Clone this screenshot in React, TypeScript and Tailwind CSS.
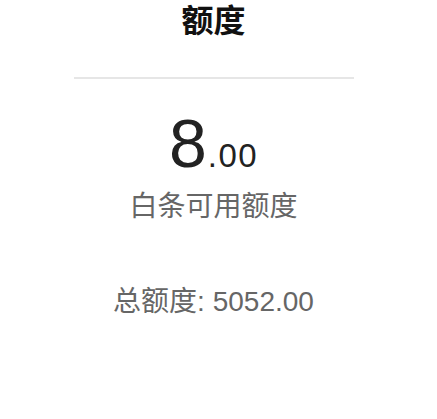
export default function App() {
    return (
        <div
            className="w-[427px] h-[419px] bg-white flex flex-col items-center"
            style={{ fontFamily: '"Liberation Sans", "Noto Sans CJK SC", sans-serif' }}
        >
            <h1 className="mt-[2px] text-[32px] leading-[38px] font-bold text-[#111]">额度</h1>
            <div className="mt-[37px] w-[280px] h-[2px] bg-[#e6e6e6]" />
            <div className="mt-[30px] flex items-baseline text-[#222]">
                <span className="text-[68px] leading-[68px] tracking-[1px]">8</span>
                <span className="text-[33px] leading-[33px] tracking-[1.5px]">.00</span>
            </div>
            <p className="mt-[16px] text-[28px] leading-[28px] text-[#666]">白条可用额度</p>
            <p className="mt-[67px] text-[28px] leading-[28px] text-[#666]">总额度: 5052.00</p>
        </div>
    )
}
